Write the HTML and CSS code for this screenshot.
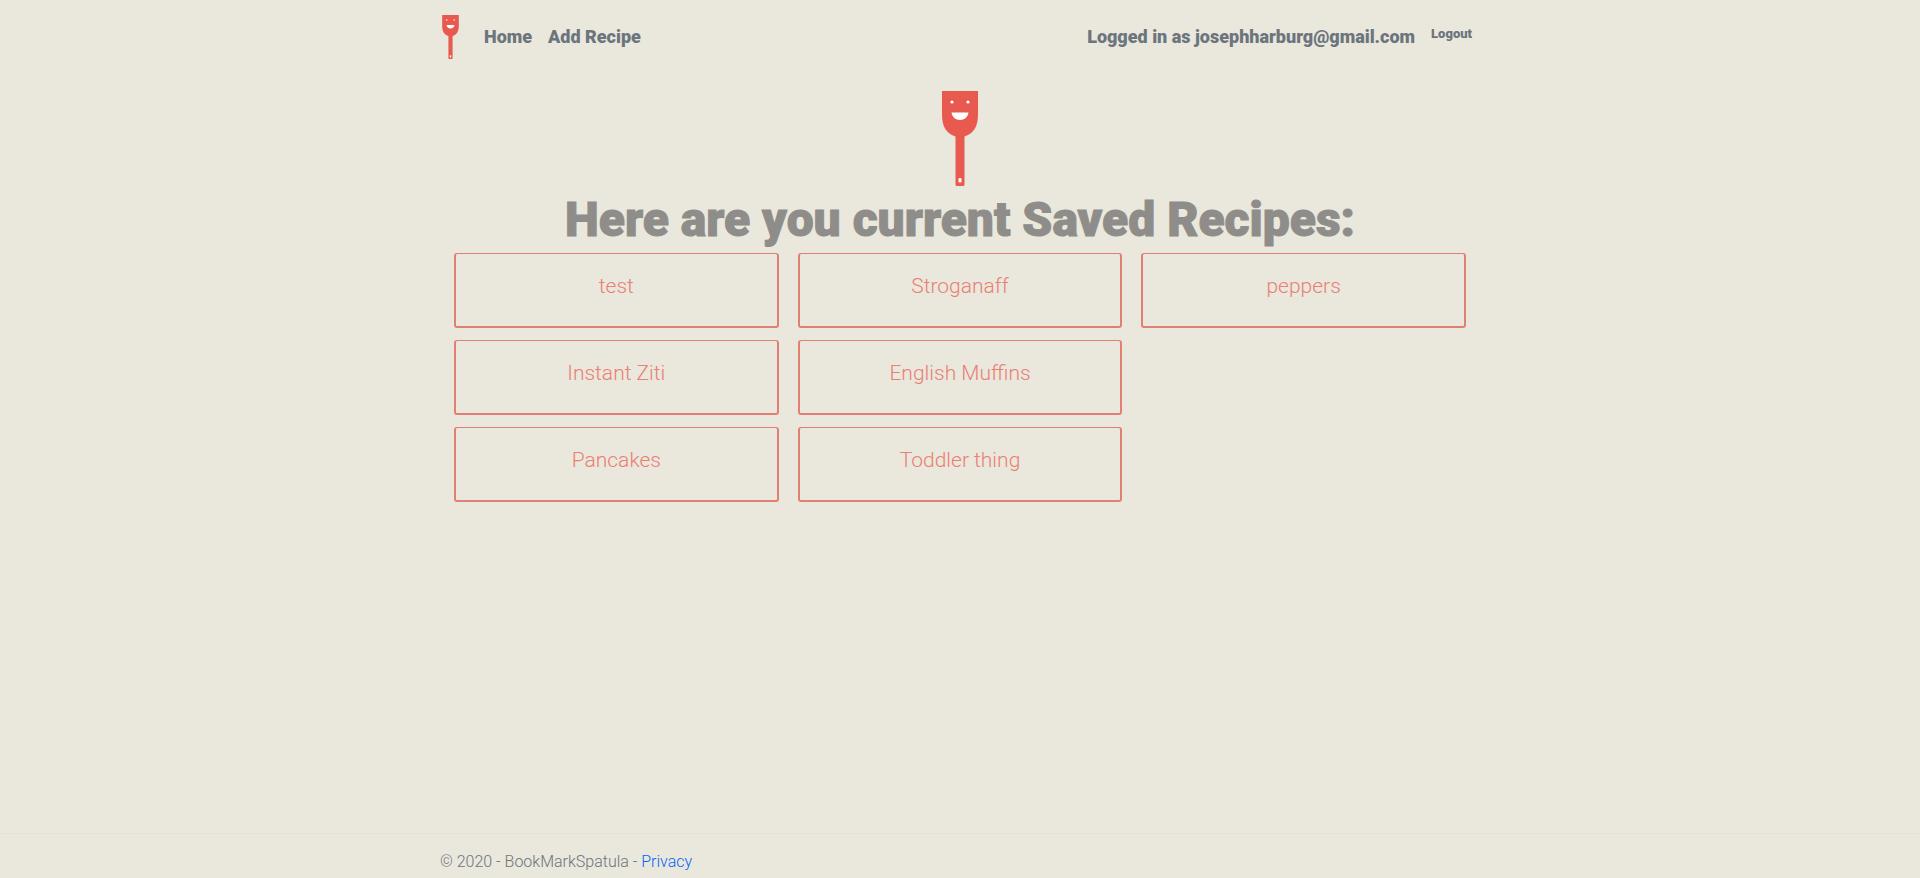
FILE: index.html
```html
<!DOCTYPE html>
<html lang="en">
<head>
<meta charset="utf-8">
<meta name="viewport" content="width=device-width, initial-scale=1">
<title>Home - BookMarkSpatula</title>
<link rel="stylesheet" href="styles.css">
</head>
<body>
<svg class="defs" aria-hidden="true">
  <symbol id="spatula" viewBox="0 0 36 95">
    <path fill="#e85a4f" d="M0 0H36V24C36 36 31 43 22.500 45.500V93.500Q22.500 95 21 95H15Q13.500 95 13.500 93.500V45.500C5 43 0 36 0 24Z"/>
    <circle cx="10" cy="11" r="1.600" fill="#fff"/>
    <circle cx="26" cy="11" r="1.600" fill="#fff"/>
    <path fill="#fff" d="M9.500 21.500H26.500C26 26 22.500 29 18 29S10 26 9.500 21.500Z"/>
    <rect x="16.500" y="87" width="3" height="4.500" rx="1" fill="#fff"/>
  </symbol>
</svg>
<header>
  <nav class="container navbar">
    <a class="brand" href="#" aria-label="BookMarkSpatula"><svg class="brand-logo"><use href="#spatula"/></svg></a>
    <a class="nav-link" href="#">Home</a>
    <a class="nav-link" href="#">Add Recipe</a>
    <a class="nav-link account" href="#">Logged in as josephharburg@gmail.com</a>
    <button class="logout" type="button">Logout</button>
  </nav>
</header>
<main class="container main">
  <svg class="hero-logo" role="img" aria-label="Smiling spatula"><use href="#spatula"/></svg>
  <h1 class="title">Here are you current Saved Recipes:</h1>
  <div class="recipes">
    <div class="column">
      <a class="card" href="#">test</a>
      <a class="card" href="#">Instant Ziti</a>
      <a class="card" href="#">Pancakes</a>
    </div>
    <div class="column">
      <a class="card" href="#">Stroganaff</a>
      <a class="card" href="#">English Muffins</a>
      <a class="card" href="#">Toddler thing</a>
    </div>
    <div class="column">
      <a class="card" href="#">peppers</a>
    </div>
  </div>
</main>
<footer class="footer">
  <div class="container">© 2020 - BookMarkSpatula - <a class="privacy" href="#">Privacy</a></div>
</footer>
</body>
</html>
```
FILE: styles.css
```css
* { box-sizing: border-box; }
body {
  margin: 0;
  min-height: 100vh;
  display: flex;
  flex-direction: column;
  background: #eae7dc;
  color: #6c757d;
  font-family: Roboto, "Open Sans", sans-serif;
}
a { text-decoration: none; color: inherit; }
.defs { display: none; }
.container {
  width: 100%;
  max-width: 1070px;
  margin: 0 auto;
  padding: 0 15px;
}
.navbar {
  display: flex;
  align-items: center;
  padding-top: 15px;
  padding-bottom: 15px;
}
.brand { margin: 0 25px 0 2px; }
.brand-logo { display: block; width: 17px; height: 44px; }
.nav-link {
  margin-right: 16px;
  font-size: 18px;
  line-height: 24px;
  font-weight: 900;
}
.account { margin-left: auto; }
.logout {
  padding: 0 8px 6px 0;
  border: 0;
  background: none;
  color: inherit;
  font: 900 13px/16px Roboto, sans-serif;
}
.main { flex: 1; text-align: center; }
.hero-logo { display: block; width: 36px; height: 95px; margin: 17px auto 2px; }
.title {
  margin: 0 0 2px;
  font-size: 48px;
  line-height: 63px;
  font-weight: 900;
  color: #8e8d8a;
  -webkit-text-stroke: 1px currentColor;
}
.recipes {
  display: grid;
  grid-template-columns: repeat(3, 1fr);
  gap: 19px;
  padding: 0 14px;
}
.column { display: flex; flex-direction: column; gap: 12px; }
.card {
  height: 75px;
  padding-top: 16px;
  border: 2px solid #e27f73;
  border-top-width: 1px;
  border-radius: 3px;
  color: #e98074;
  font-size: 21px;
  line-height: 32px;
  font-weight: 300;
}
.footer {
  border-top: 1px solid #e1e1dd;
  padding: 16px 0 4px;
  font-size: 16px;
  line-height: 24px;
  font-weight: 300;
}
.privacy { color: #0366f6; }
```
